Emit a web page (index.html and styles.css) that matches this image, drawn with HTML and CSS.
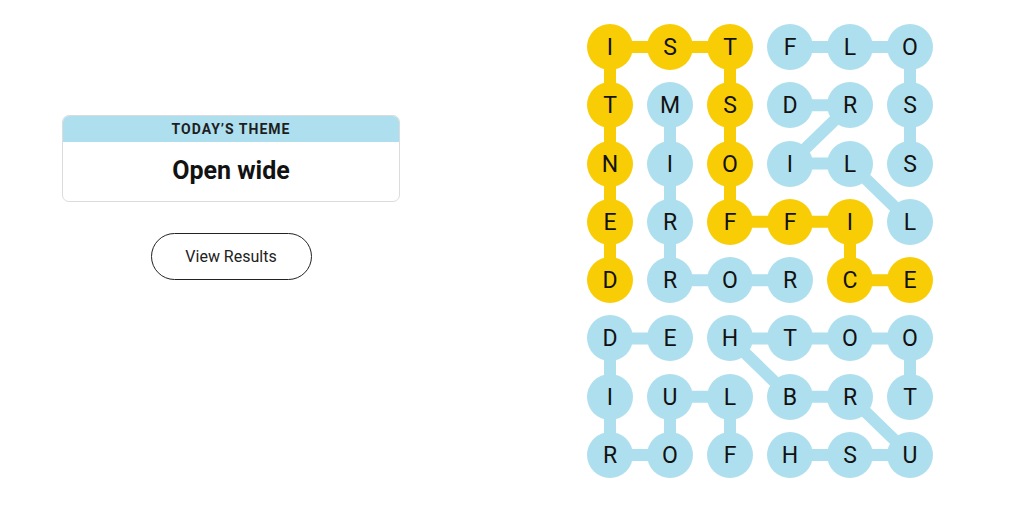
FILE: index.html
```html
<!DOCTYPE html>
<html lang="en">
<head>
<meta charset="utf-8">
<title>Strands</title>
<link rel="stylesheet" href="styles.css">
</head>
<body>
<main class="game">
  <section class="sidebar">
    <div class="theme-card">
      <div class="theme-label">TODAY’S THEME</div>
      <div class="theme-title">Open wide</div>
    </div>
    <button class="results-btn" type="button">View Results</button>
  </section>

  <section class="board">
    <!-- word paths drawn beneath the letter tiles -->
    <svg class="paths" viewBox="0 0 346 454" width="346" height="454" aria-hidden="true">
      <polyline class="path spangram" points="23,256.14 23,23 143,23 143,197.86 263,197.86 263,256.14 323,256.14"/>
      <polyline class="path found" points="203,23 323,23 323,139.57"/>
      <polyline class="path found" points="203,81.29 263,81.29 203,139.57 263,139.57 323,197.86"/>
      <polyline class="path found" points="83,81.29 83,256.14 203,256.14"/>
      <polyline class="path found" points="143,431 143,372.71 83,372.71 83,431 23,431 23,314.43 83,314.43"/>
      <polyline class="path found" points="323,372.71 323,314.43 143,314.43 203,372.71 263,372.71 323,431 203,431"/>
    </svg>
    <div class="grid">
      <span class="tile spangram">I</span><span class="tile spangram">S</span><span class="tile spangram">T</span><span class="tile found">F</span><span class="tile found">L</span><span class="tile found">O</span>
      <span class="tile spangram">T</span><span class="tile found">M</span><span class="tile spangram">S</span><span class="tile found">D</span><span class="tile found">R</span><span class="tile found">S</span>
      <span class="tile spangram">N</span><span class="tile found">I</span><span class="tile spangram">O</span><span class="tile found">I</span><span class="tile found">L</span><span class="tile found">S</span>
      <span class="tile spangram">E</span><span class="tile found">R</span><span class="tile spangram">F</span><span class="tile spangram">F</span><span class="tile spangram">I</span><span class="tile found">L</span>
      <span class="tile spangram">D</span><span class="tile found">R</span><span class="tile found">O</span><span class="tile found">R</span><span class="tile spangram">C</span><span class="tile spangram">E</span>
      <span class="tile found">D</span><span class="tile found">E</span><span class="tile found">H</span><span class="tile found">T</span><span class="tile found">O</span><span class="tile found">O</span>
      <span class="tile found">I</span><span class="tile found">U</span><span class="tile found">L</span><span class="tile found">B</span><span class="tile found">R</span><span class="tile found">T</span>
      <span class="tile found">R</span><span class="tile found">O</span><span class="tile found">F</span><span class="tile found">H</span><span class="tile found">S</span><span class="tile found">U</span>
    </div>
  </section>
</main>
</body>
</html>
```

FILE: styles.css
```css
:root {
  --blue: #aedfee;
  --yellow: #f8cd05;
  --ink: #121212;
}

* {
  box-sizing: border-box;
}

html, body {
  margin: 0;
  background: #fff;
}

body {
  width: 1024px;
  height: 515px;
  overflow: hidden;
  font-family: Roboto, "Liberation Sans", Arial, sans-serif;
  color: var(--ink);
}

.game {
  display: flex;
  align-items: flex-start;
}

/* left column: theme card and results button */
.sidebar {
  width: 338px;
  margin-left: 62px;
  margin-top: 115px;
  display: flex;
  flex-direction: column;
  align-items: center;
}

.theme-card {
  width: 100%;
  border: 1px solid #dcdcdc;
  border-radius: 7px;
  overflow: hidden;
}

.theme-label {
  background: var(--blue);
  height: 26px;
  line-height: 27px;
  text-align: center;
  font-size: 14px;
  font-weight: 700;
  letter-spacing: 1px;
  color: #1e1e1e;
}

.theme-title {
  height: 59px;
  line-height: 57px;
  text-align: center;
  font-size: 25px;
  font-weight: 700;
  letter-spacing: 0;
}

.results-btn {
  margin-top: 31px;
  width: 161px;
  height: 47px;
  border: 1.5px solid #222;
  border-radius: 24px;
  background: #fff;
  font-family: inherit;
  font-size: 16px;
  color: #222;
  padding: 0;
  cursor: pointer;
}

/* letter board */
.board {
  position: relative;
  margin-left: 187px;
  margin-top: 24px;
  width: 346px;
  height: 454px;
}

.paths {
  position: absolute;
  left: 0;
  top: 0;
}

.path {
  fill: none;
  stroke-width: 12;
  stroke-linejoin: round;
}

.path.found {
  stroke: var(--blue);
}

.path.spangram {
  stroke: var(--yellow);
}

.grid {
  position: relative;
  display: grid;
  grid-template-columns: repeat(6, 46px);
  grid-auto-rows: 46px;
  column-gap: 14px;
  row-gap: 12.29px;
}

.tile {
  width: 46px;
  height: 46px;
  border-radius: 50%;
  display: flex;
  align-items: center;
  justify-content: center;
  padding-top: 1px;
  font-size: 23px;
  font-weight: 400;
  color: var(--ink);
}

.tile.found {
  background: var(--blue);
}

.tile.spangram {
  background: var(--yellow);
}
```
